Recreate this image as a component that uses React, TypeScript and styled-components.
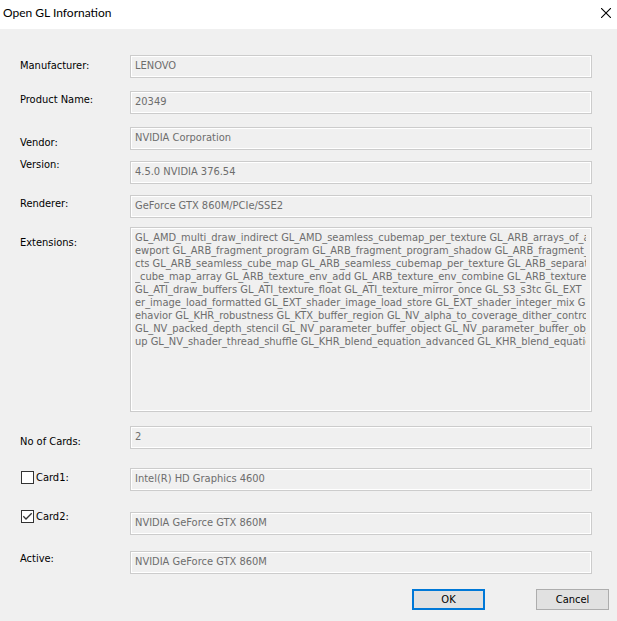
import React, { useId, useState } from "react";
import styled, { createGlobalStyle, css } from "styled-components";

const GlobalStyle = createGlobalStyle`
  *, *::before, *::after { box-sizing: border-box; }
  body { margin: 0; background: #f0f0f0; }
`;

const uiFont = css`
  font-family: "DejaVu Sans Condensed", "DejaVu Sans", sans-serif;
  font-size: 11px;
  line-height: 13px;
`;

const Dialog = styled.main`
  ${uiFont}
  min-height: 100vh;
  background: #f0f0f0;
  color: #000;
`;

const TitleBar = styled.header`
  display: flex;
  align-items: center;
  justify-content: space-between;
  height: 29px;
  padding: 0 6px 3px 3px;
  background: #fff;
`;

const Title = styled.h1`
  margin: 0;
  font: 400 12px/18px Lato, sans-serif;
`;

const CloseButton = styled.button`
  display: flex;
  padding: 0;
  border: 0;
  background: none;
`;

const Form = styled.form`
  padding: 0 25px 0 20px;
`;

const Row = styled.div`
  display: grid;
  grid-template-columns: 110px minmax(0, 1fr);
  align-items: start;
`;

const LabelCell = styled.div<{ $top: number }>`
  display: flex;
  align-items: center;
  gap: 2px;
  height: 14px;
  margin-top: ${(p) => p.$top}px;
  white-space: nowrap;
`;

const fieldFrame = css`
  border: 1px solid #cccccc;
  box-shadow: inset 0 0 0 1px #fff;
  background: #f0f0f0;
`;

const fieldText = css`
  ${uiFont}
  color: #6d6d6d;
  -webkit-text-fill-color: #6d6d6d;
  opacity: 1;
`;

const Field = styled.input<{ $top: number }>`
  ${fieldFrame}
  ${fieldText}
  width: 100%;
  height: 23px;
  margin: ${(p) => p.$top}px 0 0;
  padding: 2px 5px 4px 4px;
  border-radius: 0;
`;

const AreaFrame = styled.div<{ $top: number }>`
  ${fieldFrame}
  height: 185px;
  margin-top: ${(p) => p.$top}px;
  padding: 3px 5px 3px 4px;
`;

const Area = styled.textarea`
  ${fieldText}
  display: block;
  width: 100%;
  height: 100%;
  padding: 0;
  border: 0;
  background: transparent;
  resize: none;
  overflow: hidden;
  white-space: pre;
`;

const Check = styled.span`
  display: grid;
  flex: none;
  width: 13px;
  height: 13px;
  margin-left: 1px;

  > * {
    grid-area: 1 / 1;
  }

  svg {
    pointer-events: none;
  }
`;

const CheckInput = styled.input`
  appearance: none;
  width: 13px;
  height: 13px;
  margin: 0;
  border: 1px solid #333;
  background: #fff;
`;

const Actions = styled.div`
  display: flex;
  justify-content: flex-end;
  gap: 51px;
  padding: 15px 8px 10px;
`;

const PushButton = styled.button<{ $primary?: boolean }>`
  ${uiFont}
  width: 73px;
  height: 21px;
  padding: 0;
  border: ${(p) => (p.$primary ? "2px solid #0078d7" : "1px solid #adadad")};
  background: #e1e1e1;
  color: #000;
`;

const extensions = [
  "GL_AMD_multi_draw_indirect GL_AMD_seamless_cubemap_per_texture GL_ARB_arrays_of_a",
  "ewport GL_ARB_fragment_program GL_ARB_fragment_program_shadow GL_ARB_fragment_s",
  "cts GL_ARB_seamless_cube_map GL_ARB_seamless_cubemap_per_texture GL_ARB_separate",
  "_cube_map_array GL_ARB_texture_env_add GL_ARB_texture_env_combine GL_ARB_texture",
  "GL_ATI_draw_buffers GL_ATI_texture_float GL_ATI_texture_mirror_once GL_S3_s3tc GL_EXT",
  "er_image_load_formatted GL_EXT_shader_image_load_store GL_EXT_shader_integer_mix GL_",
  "ehavior GL_KHR_robustness GL_KTX_buffer_region GL_NV_alpha_to_coverage_dither_contro",
  "GL_NV_packed_depth_stencil GL_NV_parameter_buffer_object GL_NV_parameter_buffer_obj",
  "up GL_NV_shader_thread_shuffle GL_KHR_blend_equation_advanced GL_KHR_blend_equatio",
].join("\n");

type RowData = {
  label: string;
  value: string;
  labelTop: number;
  fieldTop: number;
  kind?: "area" | "check";
  checked?: boolean;
};

const rows: RowData[] = [
  { label: "Manufacturer:", value: "LENOVO", labelTop: 29, fieldTop: 26 },
  { label: "Product Name:", value: "20349", labelTop: 14, fieldTop: 13 },
  { label: "Vendor:", value: "NVIDIA Corporation", labelTop: 21, fieldTop: 13 },
  { label: "Version:", value: "4.5.0 NVIDIA 376.54", labelTop: 7, fieldTop: 11 },
  { label: "Renderer:", value: "GeForce GTX 860M/PCIe/SSE2", labelTop: 12, fieldTop: 11 },
  { label: "Extensions:", value: extensions, labelTop: 17, fieldTop: 9, kind: "area" },
  { label: "No of Cards:", value: "2", labelTop: 22, fieldTop: 14 },
  { label: "Card1:", value: "Intel(R) HD Graphics 4600", labelTop: 21, fieldTop: 19, kind: "check" },
  { label: "Card2:", value: "NVIDIA GeForce GTX 860M", labelTop: 18, fieldTop: 21, kind: "check", checked: true },
  { label: "Active:", value: "NVIDIA GeForce GTX 860M", labelTop: 16, fieldTop: 16 },
];

function InfoRow({ label, value, labelTop, fieldTop, kind, checked }: RowData) {
  const id = useId();
  const [on, setOn] = useState(Boolean(checked));
  return (
    <Row>
      <LabelCell $top={labelTop}>
        {kind === "check" ? (
          <>
            <Check>
              <CheckInput
                id={`${id}-check`}
                type="checkbox"
                checked={on}
                onChange={(e) => setOn(e.target.checked)}
              />
              {on && (
                <svg width="13" height="13" viewBox="0 0 13 13" fill="none" aria-hidden="true">
                  <path d="M2.3 6.3 5 9l5.7-5.7" stroke="#333" strokeWidth="1.3" />
                </svg>
              )}
            </Check>
            <label htmlFor={`${id}-check`}>{label}</label>
          </>
        ) : (
          <label htmlFor={id}>{label}</label>
        )}
      </LabelCell>
      {kind === "area" ? (
        <AreaFrame $top={fieldTop}>
          <Area id={id} value={value} wrap="off" disabled readOnly />
        </AreaFrame>
      ) : (
        <Field
          id={id}
          $top={fieldTop}
          value={value}
          aria-label={label}
          disabled
          readOnly
        />
      )}
    </Row>
  );
}

export default function App() {
  return (
    <Dialog>
      <GlobalStyle />
      <TitleBar>
        <Title>Open GL Infornation</Title>
        <CloseButton type="button" aria-label="Close">
          <svg width="10" height="10" viewBox="0 0 10 10" aria-hidden="true">
            <path d="M0 0l10 10M10 0L0 10" stroke="#000" strokeWidth="1.1" />
          </svg>
        </CloseButton>
      </TitleBar>
      <Form onSubmit={(e) => e.preventDefault()}>
        {rows.map((row) => (
          <InfoRow key={row.label} {...row} />
        ))}
      </Form>
      <Actions>
        <PushButton type="button" $primary>
          OK
        </PushButton>
        <PushButton type="button">Cancel</PushButton>
      </Actions>
    </Dialog>
  );
}
